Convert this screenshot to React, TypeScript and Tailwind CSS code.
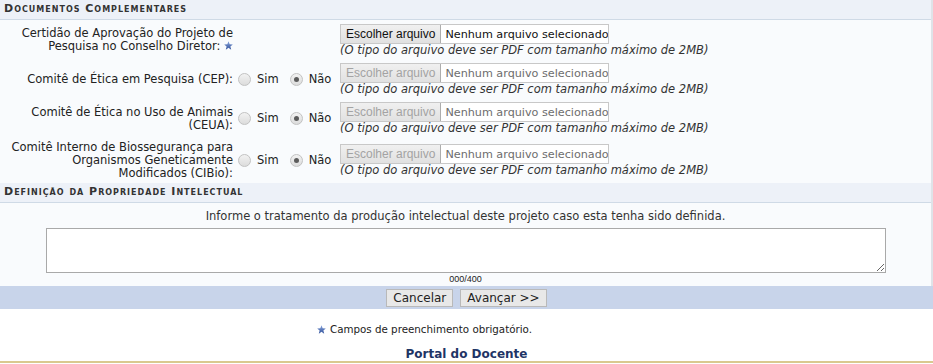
import React from "react";

function Star() {
  return (
    <svg width="9" height="9" viewBox="0 0 10 10" className="inline-block align-baseline">
      <defs>
        <linearGradient id="sg" x1="0" y1="0" x2="0" y2="1">
          <stop offset="0" stopColor="#8aa6dc" />
          <stop offset="1" stopColor="#2f4f9a" />
        </linearGradient>
      </defs>
      <polygon
        points="5,0.3 6.3,3.6 9.8,3.8 7.1,6 8,9.6 5,7.6 2,9.6 2.9,6 0.2,3.8 3.7,3.6"
        fill="url(#sg)"
      />
    </svg>
  );
}

function Radio({ checked }: { checked?: boolean }) {
  return (
    <span className="inline-flex w-[13px] h-[13px] rounded-full border border-[#c2c2c2] bg-gradient-to-b from-[#f2f2f2] to-[#dcdcdc] items-center justify-center">
      {checked && <span className="w-[5px] h-[5px] rounded-full bg-[#5c5c5c]" />}
    </span>
  );
}

function FileInput({ disabled }: { disabled?: boolean }) {
  return (
    <div className="flex items-center h-[20px] w-[269px] border border-[#c8c8c8] bg-white whitespace-nowrap overflow-hidden">
      <span
        className={
          "h-[20px] -my-px -ml-px px-[5px] flex items-center shrink-0 border border-[#adadad] bg-gradient-to-b from-[#f0f0f0] to-[#e1e1e1] font-['Liberation_Sans'] text-[12px] " +
          (disabled ? "text-[#a3a3a3]" : "text-[#111]")
        }
      >
        Escolher arquivo
      </span>
      <span className={"ml-[4px] text-[11.2px] " + (disabled ? "text-[#6d6d6d]" : "text-[#111]")}>
        Nenhum arquivo selecionado
      </span>
    </div>
  );
}

function FileCell({ disabled }: { disabled?: boolean }) {
  return (
    <div className="flex flex-col py-[3px]">
      <FileInput disabled={disabled} />
      <div className="italic text-[#333] leading-[13px] whitespace-nowrap">
        (O tipo do arquivo deve ser PDF com tamanho máximo de 2MB)
      </div>
    </div>
  );
}

function Radios() {
  return (
    <div className="flex items-center pl-[2px] text-[#222]">
      <Radio />
      <span className="ml-[6px]">Sim</span>
      <span className="ml-[11px] flex items-center">
        <Radio checked />
      </span>
      <span className="ml-[6px]">Não</span>
    </div>
  );
}

function Header({ children }: { children: React.ReactNode }) {
  return (
    <div className="h-[20px] bg-[#edf1f8] border-b border-[#cfdae6] flex items-center pl-[4px] font-bold text-[#333] text-[11px] tracking-[1px] [font-variant:small-caps]">
      {children}
    </div>
  );
}

export default function App() {
  return (
    <div className="w-[933px] h-[364px] overflow-hidden bg-white font-['DejaVu_Sans','Verdana',sans-serif] text-[11.5px] text-[#222]">
      <div className="bg-[#f9fbfd] border-r-2 border-[#dfe3e8]">
        <Header>Documentos Complementares</Header>
        <div className="grid grid-cols-[236px_104px_1fr] items-center leading-[13px]">
          <div className="text-right pr-[3px] py-[3px] whitespace-nowrap">
            Certidão de Aprovação do Projeto de
            <br />
            Pesquisa no Conselho Diretor: <Star />
          </div>
          <div />
          <div className="pt-[1px]">
            <FileCell />
          </div>

          <div className="text-right pr-[3px] py-[3px] whitespace-nowrap">Comitê de Ética em Pesquisa (CEP):</div>
          <Radios />
          <FileCell disabled />

          <div className="text-right pr-[3px] py-[3px] whitespace-nowrap">
            Comitê de Ética no Uso de Animais
            <br />
            (CEUA):
          </div>
          <Radios />
          <FileCell disabled />

          <div className="text-right pr-[3px] py-[3px] whitespace-nowrap">
            Comitê Interno de Biossegurança para
            <br />
            Organismos Geneticamente
            <br />
            Modificados (CIBio):
          </div>
          <Radios />
          <FileCell disabled />
        </div>
        <Header>Definição da Propriedade Intelectual</Header>
        <div className="flex flex-col items-center pt-[7px] pb-[2px]">
          <div className="text-[#333] leading-[13px]">
            Informe o tratamento da produção intelectual deste projeto caso esta tenha sido definida.
          </div>
          <textarea className="mt-[5px] w-[840px] h-[45px] border border-[#a9a9a9] bg-white resize-y outline-none" />
          <div className="text-[9px] leading-[10px] mt-[1px] text-[#222] font-['Liberation_Sans']">000/400</div>
        </div>
      </div>
      <div className="h-[23px] bg-[#c8d4ea] flex items-center justify-center gap-[7px]">
        <button className="h-[18px] px-[6px] bg-[#e8e8e8] border border-[#b9b9b9] text-[12px] leading-[16px] text-[#222]">
          Cancelar
        </button>
        <button className="h-[18px] px-[6px] bg-[#e8e8e8] border border-[#b9b9b9] text-[12px] leading-[16px] text-[#222]">
          Avançar &gt;&gt;
        </button>
      </div>
      <div className="flex justify-center items-center gap-[4px] mt-[13px] pr-[84px] text-[10.3px] text-[#222]">
        <Star />
        <span>Campos de preenchimento obrigatório.</span>
      </div>
      <div className="text-center mt-[10px] font-bold text-[12px] text-[#1f3566] leading-[14px] border-b-2 border-[#d9c98f]">
        Portal do Docente
      </div>
    </div>
  );
}
